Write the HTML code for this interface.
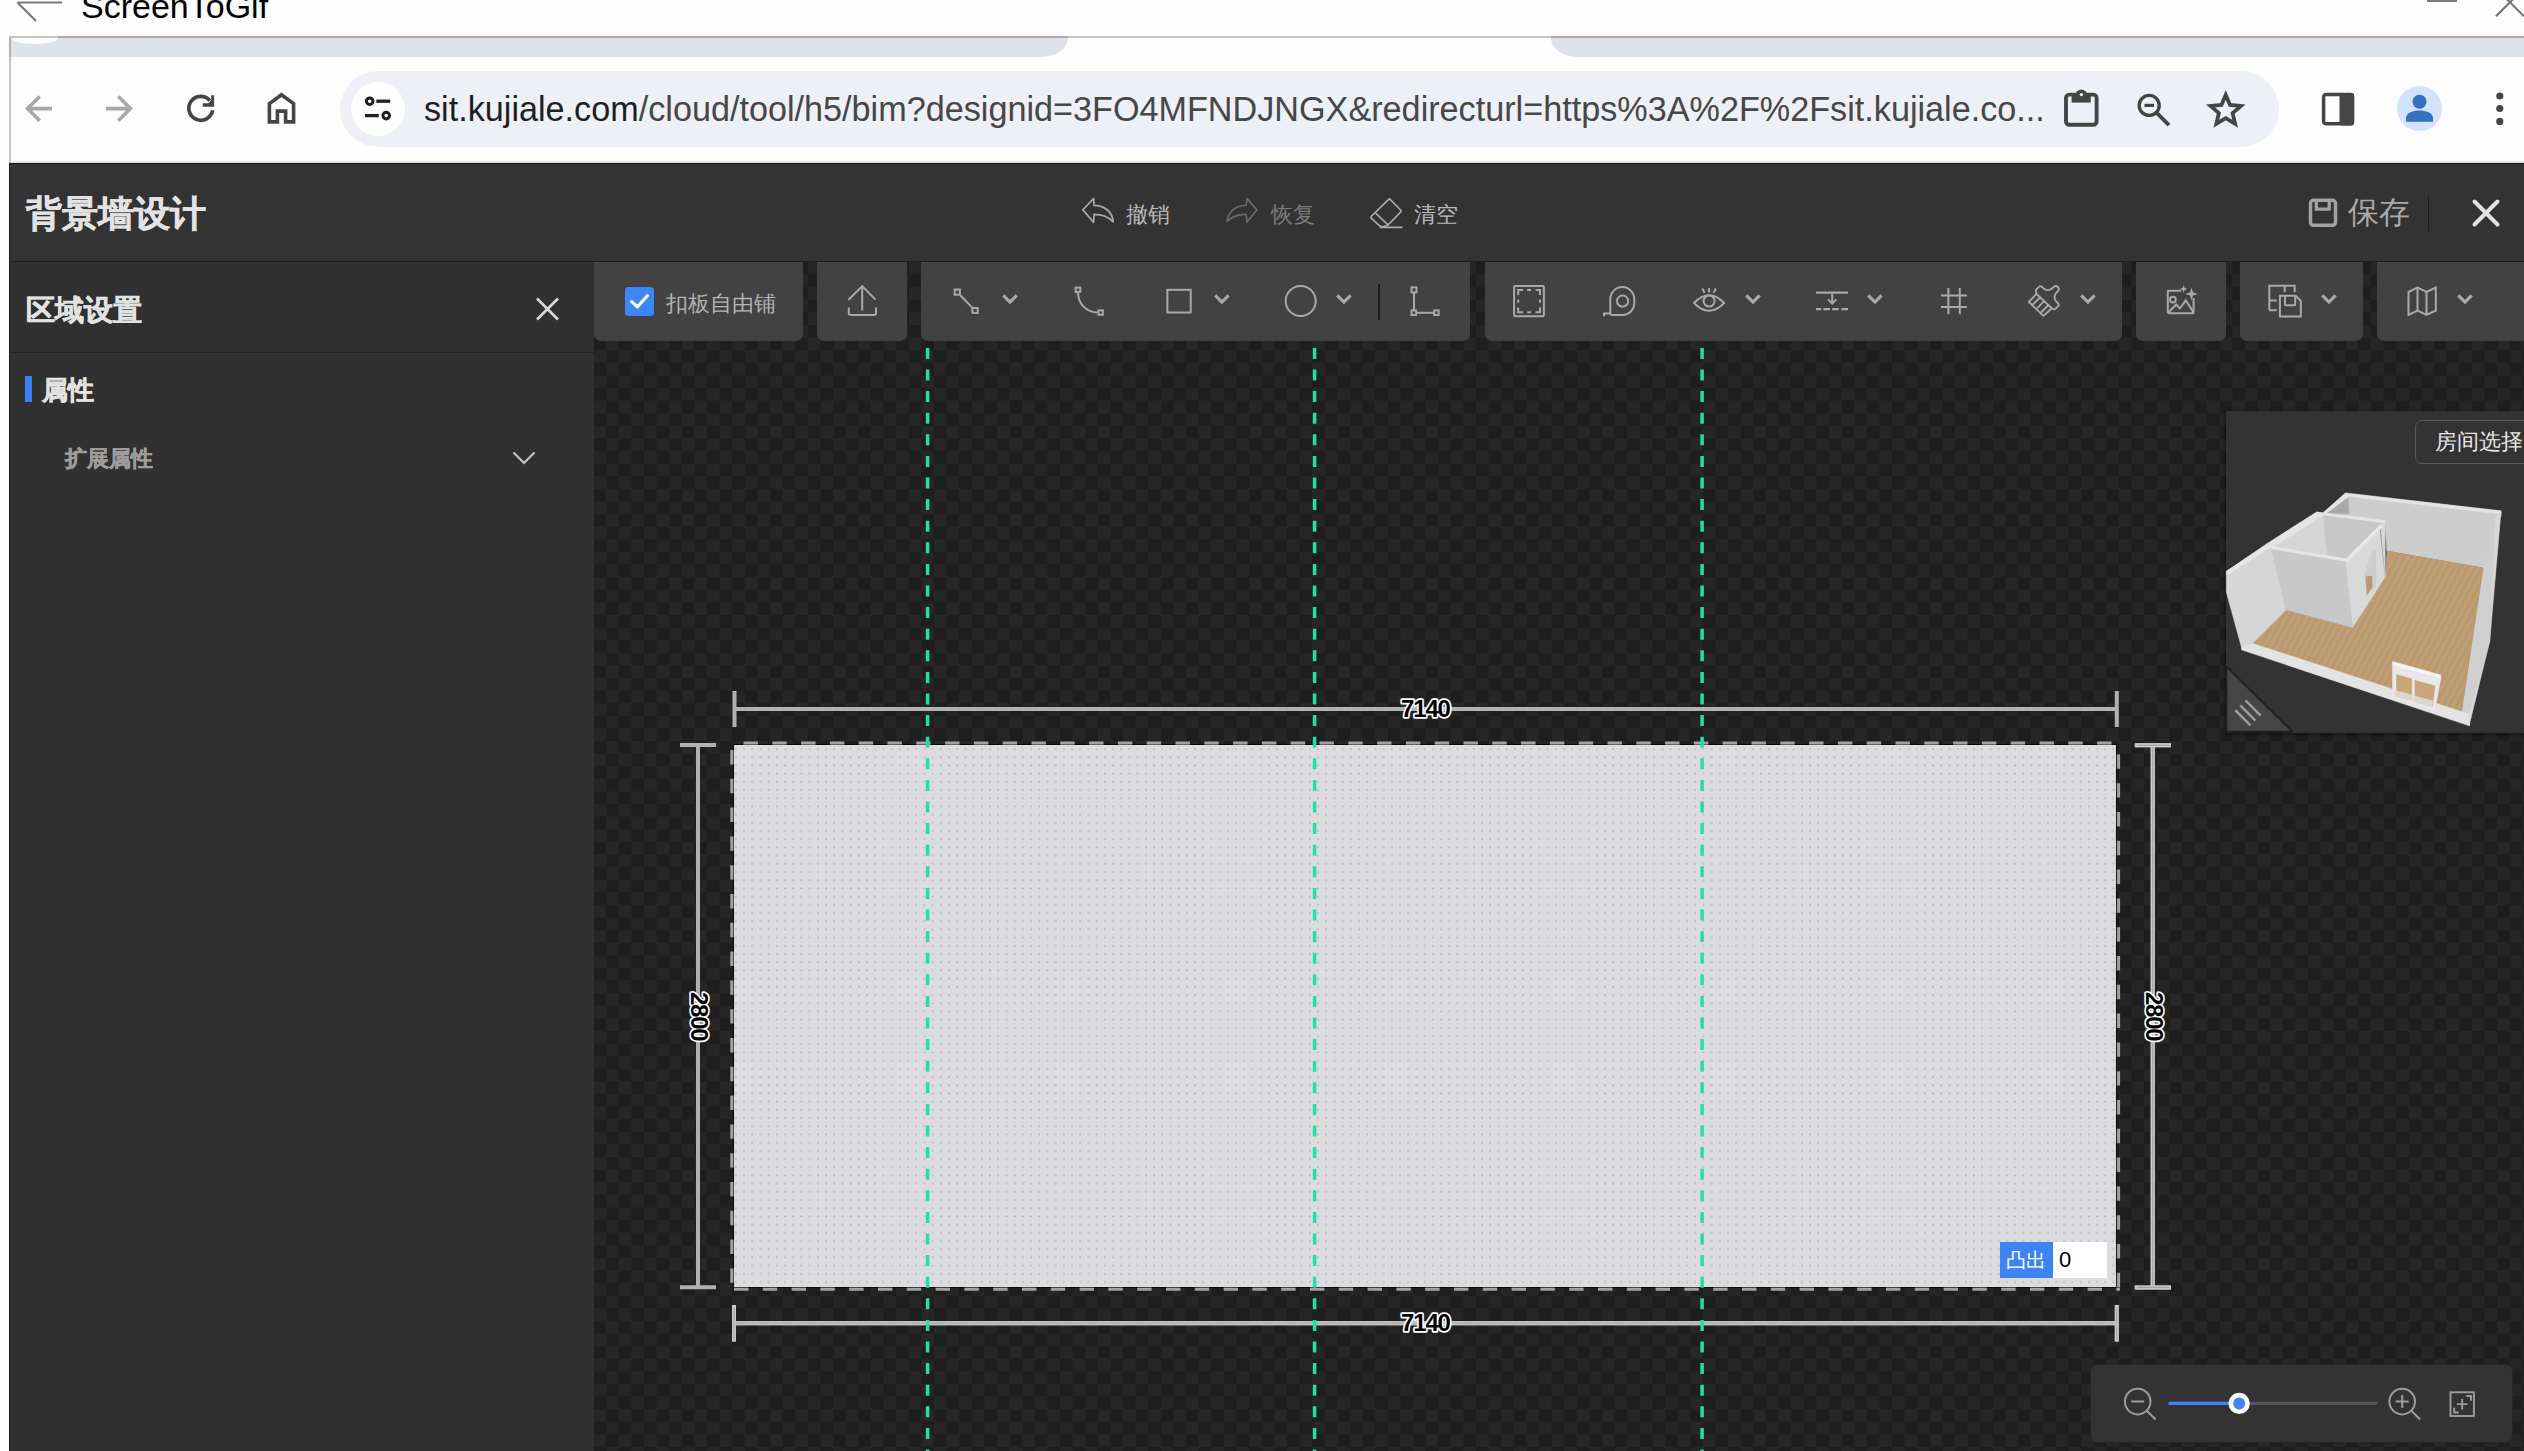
<!DOCTYPE html>
<html><head><meta charset="utf-8">
<style>
*{box-sizing:border-box}
html,body{margin:0;padding:0}
body{width:2524px;height:1451px;overflow:hidden;position:relative;background:#fdfdfd;font-family:"Liberation Sans",sans-serif}
.a{position:absolute}
.t{position:absolute;white-space:nowrap;line-height:1}
svg{position:absolute;overflow:visible}
</style></head><body>

<!-- ===== ScreenToGif title bar ===== -->
<svg style="left:0;top:0" width="80" height="36"><path d="M62 2.5H17.5M17.5 2.5L36 21" stroke="#7b7b7b" stroke-width="2.2" fill="none"/></svg>
<div class="t" id="stg" style="left:81px;top:-11px;font-size:34px;color:#000">ScreenToGif</div>
<div class="a" style="left:2427px;top:0;width:30px;height:2px;background:#7c7c7c"></div>
<svg style="left:2480px;top:0" width="44" height="36"><path d="M16 16.3L44 -11.7M16 -11.7L44 16.3" stroke="#6f6f6f" stroke-width="2" fill="none"/></svg>

<!-- ===== Chrome frame ===== -->
<div class="a" style="left:9px;top:36px;width:2515px;height:2px;background:#c6c6c6"></div>
<div class="a" style="left:9px;top:36px;width:2px;height:1415px;background:#c6c6c6"></div>
<!-- tab strip -->
<div class="a" style="left:11px;top:38px;width:1057px;height:19px;background:#dee3ea;border-bottom-right-radius:26px 19px"></div>
<div class="a" style="left:1551px;top:38px;width:973px;height:19px;background:#dee3ea;border-bottom-left-radius:26px 19px"></div>
<div class="a" style="left:58px;top:36px;width:1010px;height:2px;background:#abacaf"></div>
<div class="a" style="left:9px;top:38px;width:2px;height:19px;background:#afb0b2"></div>
<div class="a" style="left:1551px;top:36px;width:973px;height:2px;background:#abacaf"></div>
<div class="a" style="left:12px;top:38px;width:46px;height:6px;background:#fdfdfd;border-radius:0 0 23px 23px / 0 0 6px 6px"></div>

<!-- toolbar -->
<div class="a" style="left:11px;top:57px;width:2513px;height:104px;background:#fdfdfd"></div>
<div class="a" style="left:11px;top:161px;width:2513px;height:2px;background:#e6e6e6"></div>

<!-- nav icons -->
<svg style="left:20px;top:90px" width="40" height="40" viewBox="0 0 40 40"><path d="M32 18.6H8.5M19.7 6.5L7.6 18.6L19.7 30.7" stroke="#a8a8a8" stroke-width="3.6" fill="none"/></svg>
<svg style="left:100px;top:90px" width="40" height="40" viewBox="0 0 40 40"><path d="M6 18.6H29.5M18.3 6.5L30.4 18.6L18.3 30.7" stroke="#a8a8a8" stroke-width="3.6" fill="none"/></svg>
<svg style="left:180px;top:88px" width="44" height="44" viewBox="0 0 1451 1451"><path d="M1076 735A395 395 0 1 1 985 410" stroke="#454545" stroke-width="122" fill="none"/><path d="M750 500H930L1030 395V235H1125V615H750Z" fill="#454545"/></svg>
<svg style="left:262px;top:88px" width="40" height="40" viewBox="0 0 40 40"><path d="M7.4 33.9V15.6L19.5 6.7L31.6 15.6V33.9H23.6V23.1H15.4V33.9Z" stroke="#454545" stroke-width="3.6" fill="none" stroke-linejoin="miter"/></svg>

<!-- omnibox -->
<div class="a" style="left:340px;top:71px;width:1939px;height:76px;background:#edf0f7;border-radius:38px"></div>
<div class="a" style="left:351px;top:82px;width:54px;height:54px;background:#fdfdfd;border-radius:27px"></div>
<svg style="left:360px;top:92px" width="36" height="36" viewBox="0 0 36 36"><circle cx="9.7" cy="9.2" r="3.3" stroke="#202020" stroke-width="3" fill="none"/><path d="M16.3 9.2H30.2" stroke="#202020" stroke-width="3.3"/><path d="M5 23.6H18.7" stroke="#202020" stroke-width="3.3"/><circle cx="26.2" cy="23.6" r="3.3" stroke="#202020" stroke-width="3" fill="none"/></svg>
<div class="t" id="url" style="left:424px;top:92px;font-size:34.2px;color:#474747"><span style="color:#1f1f1f">sit.kujiale.com</span>/cloud/tool/h5/bim?designid=3FO4MFNDJNGX&amp;redirecturl=htt<span>ps</span>%3A%2F%2Fsit.kujiale.co...</div>

<!-- right browser icons -->
<svg style="left:2060px;top:86px" width="44" height="44" viewBox="0 0 44 44"><rect x="6" y="8.6" width="30.6" height="30.2" rx="3.2" stroke="#454545" stroke-width="3.9" fill="none"/><rect x="11.6" y="9.5" width="19.2" height="7.1" fill="#454545"/><circle cx="21.4" cy="9.3" r="5.7" fill="#454545"/><circle cx="21.4" cy="8.6" r="1.7" fill="#edf0f7"/></svg>
<svg style="left:2133.7px;top:88.6px" width="44" height="44" viewBox="0 0 44 44"><circle cx="15.2" cy="16.4" r="10" stroke="#454545" stroke-width="3.4" fill="none"/><path d="M22.5 23.7L35 36.2" stroke="#454545" stroke-width="3.8"/><path d="M10.5 16.4H20" stroke="#454545" stroke-width="3.2"/></svg>
<svg style="left:2204px;top:88px" width="44" height="44" viewBox="0 0 44 44"><path transform="translate(2.5 0) scale(0.93)" d="M20.7 7.5L25.3 18.3L37 19.3L28.1 27L30.8 38.4L20.7 32.4L10.6 38.4L13.3 27L4.4 19.3L16.1 18.3Z" stroke="#454545" stroke-width="4.1" fill="none" stroke-linejoin="miter"/></svg>
<svg style="left:2318px;top:88px" width="40" height="40" viewBox="0 0 40 40"><rect x="5.6" y="6.6" width="29" height="29.2" rx="2.5" stroke="#454545" stroke-width="3.5" fill="none"/><rect x="21.5" y="5" width="14.5" height="32.5" rx="2" fill="#454545"/></svg>
<div class="a" style="left:2397px;top:86px;width:45px;height:45px;border-radius:50%;background:#d3e3fd"></div>
<svg style="left:2397px;top:86px" width="45" height="45" viewBox="0 0 45 45"><circle cx="22.5" cy="15.8" r="7" fill="#3570c3"/><path d="M9 35.7V32C9 27 16.5 24.6 22.5 24.6C28.5 24.6 36 27 36 32V35.7Z" fill="#3570c3"/></svg>
<svg style="left:2490px;top:88px" width="20" height="40" viewBox="0 0 20 40"><circle cx="9.8" cy="8" r="3.6" fill="#454545"/><circle cx="9.8" cy="20.5" r="3.6" fill="#454545"/><circle cx="9.8" cy="33.4" r="3.6" fill="#454545"/></svg>

<!-- ===== APP ===== -->
<div class="a" style="left:9px;top:163px;width:2515px;height:1288px;background:#333333;border-top:1px solid #151515;border-left:1px solid #1c1c1c"></div>
<!-- header -->
<div class="a" style="left:10px;top:261px;width:2514px;height:1px;background:#1e1e1e"></div>
<div class="t" id="title" style="-webkit-text-stroke:0.5px #e2e2e2;left:26px;top:196px;font-size:36px;font-weight:bold;color:#e2e2e2">背景墙设计</div>

<!-- header center -->
<svg style="left:1075px;top:192px" width="50" height="40" viewBox="0 0 1814 1451"><path d="M285 645L675 235L690 485C1050 490 1360 700 1385 1085C1200 880 950 815 690 815L675 1100Z" stroke="#ababab" stroke-width="62" fill="none" stroke-linejoin="round"/></svg>
<div class="t" id="undo" style="left:1125.5px;top:203.5px;font-size:22px;color:#b9b9b9">撤销</div>
<svg style="left:1215px;top:192px" width="50" height="40" viewBox="0 0 1814 1451"><path d="M1160 240L1525 650L1160 1090L1130 815C900 800 650 870 440 1060C480 750 700 500 1130 480Z" stroke="#686a6e" stroke-width="62" fill="none" stroke-linejoin="round"/></svg>
<div class="t" id="redo" style="left:1270.5px;top:203.5px;font-size:22px;color:#7b7b7b">恢复</div>
<svg style="left:1362px;top:192px" width="50" height="40" viewBox="0 0 1814 1451"><path d="M995 240L1420 670Q1430 700 1410 720L930 1210L760 1265Q680 1260 620 1210L330 950Q300 920 330 890Z" stroke="#ababab" stroke-width="58" fill="none" stroke-linejoin="round"/><path d="M505 775L925 1175M660 1285H1445" stroke="#ababab" stroke-width="58" fill="none" stroke-linecap="round"/></svg>
<div class="t" id="clear" style="left:1413.5px;top:203.5px;font-size:22px;color:#b9b9b9">清空</div>
<!-- header right -->
<svg style="left:2300px;top:190px" width="44" height="44" viewBox="0 0 44 44"><rect x="10.5" y="10.3" width="25" height="25" rx="3" stroke="#a2a2a2" stroke-width="3.5" fill="none"/><path d="M16.3 10V19.2H29.2V10" stroke="#a2a2a2" stroke-width="3.3" fill="none"/></svg>
<div class="t" id="save" style="left:2348px;top:197px;font-size:31px;color:#a9a9a9">保存</div>
<div class="a" style="left:2428px;top:195px;width:1px;height:36px;background:#1f1f1f"></div>
<svg style="left:2466px;top:193px" width="40" height="40" viewBox="0 0 40 40"><path d="M8.5 8.5L31.5 31.5M31.5 8.5L8.5 31.5" stroke="#e2e2e2" stroke-width="4" stroke-linecap="round"/></svg>

<!-- ===== left panel ===== -->
<div class="a" style="left:10px;top:262px;width:584px;height:1189px;background:#313131"></div>
<div class="a" style="left:10px;top:352px;width:584px;height:1px;background:#222222"></div>
<div class="t" id="ptitle" style="-webkit-text-stroke:0.5px #e2e2e2;left:25.5px;top:296px;font-size:29px;font-weight:bold;color:#e2e2e2">区域设置</div>
<svg style="left:530px;top:292px" width="34" height="34" viewBox="0 0 34 34"><path d="M7 6.5L28 27.5M28 6.5L7 27.5" stroke="#dadada" stroke-width="2.6"/></svg>
<div class="a" style="left:25px;top:376px;width:7px;height:26px;background:#3b7ff6"></div>
<div class="t" id="attr" style="-webkit-text-stroke:0.5px #e2e2e2;left:42px;top:378px;font-size:25.5px;font-weight:bold;color:#e2e2e2">属性</div>
<div class="t" id="ext" style="-webkit-text-stroke:0.4px #9c9c9c;left:65px;top:448px;font-size:22px;font-weight:bold;color:#9c9c9c">扩展属性</div>
<svg style="left:508px;top:444px" width="32" height="28" viewBox="0 0 32 28"><path d="M5.5 8.5L16 19L26.5 8.5" stroke="#c4c4c4" stroke-width="2.2" fill="none"/></svg>

<!-- ===== canvas ===== -->
<svg style="left:594px;top:262px" width="1930" height="1189"><defs><pattern id="chk" x="-0.4" y="0" width="25.212" height="25.212" patternUnits="userSpaceOnUse"><rect width="25.212" height="25.212" fill="#262626"/><rect width="12.606" height="12.606" fill="#1e1e1e"/><rect x="12.606" y="12.606" width="12.606" height="12.606" fill="#1e1e1e"/></pattern></defs><rect width="1930" height="1189" fill="url(#chk)"/></svg>

<!-- toolbar groups -->
<div class="a" style="left:594px;top:262px;width:209px;height:79px;background:#424242;border-radius:0 0 7px 7px"></div>
<div class="a" style="left:817px;top:262px;width:90px;height:79px;background:#424242;border-radius:0 0 7px 7px"></div>
<div class="a" style="left:921px;top:262px;width:549px;height:79px;background:#424242;border-radius:0 0 7px 7px"></div>
<div class="a" style="left:1485px;top:262px;width:637px;height:79px;background:#424242;border-radius:0 0 7px 7px"></div>
<div class="a" style="left:2136px;top:262px;width:90px;height:79px;background:#424242;border-radius:0 0 7px 7px"></div>
<div class="a" style="left:2240px;top:262px;width:123px;height:79px;background:#424242;border-radius:0 0 7px 7px"></div>
<div class="a" style="left:2377px;top:262px;width:160px;height:79px;background:#424242;border-radius:0 0 7px 7px"></div>

<!-- toolbar icons -->
<div class="a" style="left:625px;top:287px;width:29px;height:29px;background:#3d86f6;border-radius:3.5px"></div>
<div class="t" id="kb" style="left:665.5px;top:292.5px;font-size:22px;color:#b3b3b3">扣板自由铺</div>
<svg style="left:0;top:0" width="2524" height="1451" viewBox="0 0 2524 1451">
<g fill="none" stroke="#ffffff" stroke-width="3.2" stroke-linecap="round" stroke-linejoin="round"><path d="M631.7 301.6L637.4 306.9L647.4 295.8"/></g>
<g fill="none" stroke="#a9a9a9" stroke-width="2">
<path d="M848.3 300L862.2 286.1L875.6 299.6M862.2 286.5V310.5" stroke-linejoin="miter"/>
<path d="M848.8 307.5V312.8Q848.8 315 851 315H873.8Q876 315 876 312.8V307.5"/>
<rect x="954.7" y="289.5" width="5.2" height="5.2"/><path d="M960.3 295.3L972.2 307.6"/><rect x="972.4" y="308" width="5.3" height="4.9"/>
<rect x="1075.6" y="287.6" width="4.7" height="4.3"/><path d="M1078 292.4C1078.2 304 1086 312 1097.8 312.6"/><rect x="1098.4" y="310.4" width="4.4" height="4.4"/>
<rect x="1167.4" y="289.8" width="23.3" height="22.7"/>
<circle cx="1300.7" cy="301" r="15"/>
<rect x="1411.5" y="287.4" width="5" height="5"/><rect x="1411.5" y="310.4" width="4.6" height="4.6"/><rect x="1434.2" y="310.4" width="4.4" height="4.6"/>
<path d="M1414 292.4V310.4M1416.1 312.7H1434.2"/>
<rect x="1514.1" y="286" width="29.8" height="30.2" rx="1.2"/>
<path d="M1518.2 295V289.9H1523M1535.5 289.9H1540V295M1518.2 307.5V312.3H1523M1535.5 312.3H1540V307.5M1527.2 289.9H1531M1527.2 312.3H1531M1518.2 299.4V302.8M1540 299.4V302.8"/>
<path d="M1604 316.2V313.5H1610.3M1610.3 313.5V299.1A12 12 0 0 1 1634.3 299.1V303A12 12 0 0 1 1622.3 315H1612.3Q1610.3 315 1610.3 313"/>
<circle cx="1622.6" cy="301.1" r="5.6"/>
<path d="M1694 303Q1709.1 287.5 1724.2 303Q1709.1 318.5 1694 303Z"/><circle cx="1709.1" cy="301.1" r="5.5"/>
<path d="M1709.1 288V292.6M1702.3 288.6L1704.6 292.8M1715.9 288.6L1713.6 292.8"/>
<path d="M1816 292.6H1848" stroke-width="2.2"/><path d="M1832.2 293.5V303.5M1828 299.4L1832.2 303.6L1836.4 299.4"/>
<path d="M1816 309.2H1821.3M1823.3 309.2H1830M1832.2 309.2H1838.8M1841.3 309.2H1848" stroke-width="2.2"/>
<path d="M1948.4 288V314.2M1959.8 288V314.2M1941 295.5H1967M1941 307H1967"/>
<path d="M2167.8 313.3V291.5Q2167.8 290.8 2168.5 290.8H2181M2193.6 298V312.5Q2193.6 313.3 2192.8 313.3H2168.2"/>
<path d="M2168.2 312.8L2176.2 304.5L2179.8 308.5L2185.8 300.3L2193.4 312.2"/><circle cx="2172.9" cy="299.6" r="2.9"/>
<path d="M2269.3 310.2V285.8H2294.7V292.2M2284.7 285.8V292.2M2269.3 310.2H2276.8M2269.3 300.6H2276.8"/>
<path d="M2279.9 295.8H2295.6L2300.8 300.8V316.6H2279.9Z"/><path d="M2285 295.8V304.6Q2285 305.3 2285.7 305.3H2294.5Q2295.2 305.3 2295.2 304.6V295.8"/>
<path d="M2408.5 292L2417.5 287.5L2426.5 292L2435.8 287.5V310.5L2426.5 315L2417.5 310.5L2408.5 315Z M2417.5 287.5V310.5M2426.5 292V315"/>
</g>
<g fill="#a9a9a9"><path d="M2191.5 287.5L2193 292.5L2198 294L2193 295.5L2191.5 300.5L2190 295.5L2185 294L2190 292.5Z"/><path d="M2183.6 285L2184.6 288L2187.6 289L2184.6 290L2183.6 293L2182.6 290L2179.6 289L2182.6 288Z"/></g>
<g fill="none" stroke="#a9a9a9" stroke-width="3.1" stroke-linejoin="miter">
<path d="M1003.3 295.3L1010 302L1016.7 295.3"/><path d="M1215.2 295.3L1221.9 302L1228.6 295.3"/><path d="M1337.2 295.3L1343.9 302L1350.6 295.3"/>
<path d="M1746.3 295.3L1753 302L1759.7 295.3"/><path d="M1868.2 295.3L1874.9 302L1881.6 295.3"/><path d="M2081.2 295.3L2087.9 302L2094.6 295.3"/>
<path d="M2322.2 295.3L2328.9 302L2335.6 295.3"/><path d="M2458.3 295.3L2465 302L2471.7 295.3"/>
</g>
<rect x="1378" y="284" width="2" height="36" fill="#1c1c1c"/>
<svg x="2024" y="281" width="40" height="40" viewBox="0 0 1451 1451"><g fill="none" stroke="#a9a9a9" stroke-width="68" stroke-linejoin="round">
<path d="M455 470L175 760L705 1265L1010 990"/>
<path d="M455 470L430 360Q420 330 445 305L565 195Q595 175 625 198L740 290Q860 370 990 290L1125 185Q1160 160 1190 190L1255 255Q1285 290 1255 330L1160 445Q1060 580 1150 720L1250 830Q1280 865 1250 900L1130 1015Q1090 1045 1050 1015L1010 990Z"/>
<path d="M310 860L590 590M455 1010L740 720M600 1160L880 880"/></g></svg>
</svg>

<!-- ===== canvas drawing ===== -->
<svg style="left:0;top:0" width="2524" height="1451" viewBox="0 0 2524 1451">
<defs>
<pattern id="dots" x="734" y="745" width="8.2" height="8.2" patternUnits="userSpaceOnUse"><rect x="1.05" y="3.25" width="1.6" height="1.6" fill="#9ab6ec"/></pattern>
</defs>
<!-- rect -->
<rect x="734" y="745" width="1382" height="542" fill="#dcdcdc"/>
<g stroke="#0a0a0a" stroke-width="1.1">
<path d="M733 744.5H2117" stroke-dasharray="14.4 14.4" stroke-dashoffset="3.9"/>
<path d="M734 1287.5H2117" stroke-dasharray="14.4 14.4" stroke-dashoffset="14.4"/>
<path d="M733.5 744V1288" stroke-dasharray="14.4 14.4" stroke-dashoffset="8.4"/>
<path d="M2116.5 744V1288" stroke-dasharray="14.4 14.4" stroke-dashoffset="4"/>
</g>
<rect x="734" y="745" width="1382" height="542" fill="url(#dots)"/>
<g stroke="#a2a2a2" stroke-width="3">
<path d="M734 743H2120" stroke-dasharray="14.4 14.4" stroke-dashoffset="-9.5"/>
<path d="M734 1289.3H2120" stroke-dasharray="14.4 14.4" stroke-dashoffset="0"/>
<path d="M731.8 745V1291" stroke-dasharray="14.4 14.4" stroke-dashoffset="-5"/>
<path d="M2118.6 745V1291" stroke-dasharray="14.4 14.4" stroke-dashoffset="-9.4"/>
</g>
<!-- dimension lines -->
<g stroke="#b1b1b1" stroke-width="4">
<path d="M734 709H2117M734.5 691V727M2116.8 691V727"/>
<path d="M734 1323.2H2117M734 1305V1341.6M2116.8 1305V1341.6"/>
<path d="M698 745V1288M680 745H716M680 1287.3H716"/>
<path d="M2152.7 745V1288M2134.8 745.2H2171M2134.8 1287.4H2171"/>
</g>
<g stroke="#c9c9c9" stroke-width="4">
<path d="M734 1323.2H2117M734 1305V1341.6M2116.8 1305V1341.6"/>
<path d="M2152.7 745V1288M2134.8 745.2H2171M2134.8 1287.4H2171"/>
</g>
<g stroke="#a2a2a2" stroke-width="1.1">
<path d="M736 1323.2H2115M734 1307V1339.6M2116.8 1307V1339.6"/>
<path d="M2152.7 747V1286M2136.8 745.2H2169M2136.8 1287.4H2169"/>
</g>
<!-- green guides -->
<g stroke="#1fe0a8" stroke-width="3.5" stroke-dasharray="11 10.6">
<path d="M927.6 347.9V1451"/><path d="M1314.6 347.9V1451"/><path d="M1702.1 347.9V1451"/>
</g>
<!-- labels -->
<g font-family="Liberation Sans" font-weight="bold" font-size="24" fill="#000" stroke="#fff" stroke-width="3.4" paint-order="stroke" stroke-linejoin="round" text-anchor="middle" letter-spacing="-1.2">
<text x="1425.4" y="716.8">7140</text>
<text x="1425.4" y="1331">7140</text>
<text transform="translate(691 1016.2) rotate(90)" x="0" y="0">2800</text>
<text transform="translate(2146 1016.2) rotate(90)" x="0" y="0">2800</text>
</g>
</svg>
<!-- protrude input -->
<div class="a" style="left:2000px;top:1242px;width:53px;height:36px;background:#3d84f2"></div>
<div class="t" id="tc" style="left:2006px;top:1250px;font-size:20px;color:#fff">凸出</div>
<div class="a" style="left:2053px;top:1242px;width:54px;height:36px;background:#ffffff"></div>
<div class="t" id="zero" style="left:2059px;top:1249px;font-size:22px;color:#000">0</div>

<!-- ===== thumbnail ===== -->
<div class="a" style="left:2226px;top:411px;width:298px;height:322px;background:#333333;box-shadow:0 1px 3px 1px rgba(0,0,0,0.45)"></div>
<div class="a" style="left:2415px;top:420px;width:130px;height:44px;border:1px solid #5a5a5a;border-radius:7px;background:#333333"></div>
<div class="t" id="room" style="left:2434.5px;top:430.5px;font-size:22px;color:#e6e6e6">房间选择</div>
<svg style="left:2220px;top:480px" width="300" height="260" viewBox="0 0 1674 1451">
<!-- silhouette / back wall -->
<polygon points="700,75 1568,175 1568,205 1535,205 1470,490 930,395 922,232 590,182" fill="#cdcdcd" stroke="#cdcdcd" stroke-width="3" stroke-linejoin="round"/>
<polygon points="588,180 712,78 720,190" fill="#a9a9a9" stroke="#a9a9a9" stroke-width="3" stroke-linejoin="round"/>
<polygon points="700,72 1568,172 1568,190 720,92 590,188 578,180" fill="#e4e4e4" stroke="#e4e4e4" stroke-width="3" stroke-linejoin="round"/>
<!-- right wall -->
<polygon points="1535,205 1568,178 1505,900 1390,1372 1350,1295 1470,490" fill="#d9d9d9" stroke="#d9d9d9" stroke-width="3" stroke-linejoin="round"/>
<polygon points="1470,490 1535,205 1505,900 1390,1300 1350,1290" fill="#cfcfcf" stroke="#cfcfcf" stroke-width="3" stroke-linejoin="round"/>
<!-- floor -->
<defs><pattern id="wood" width="26" height="34" patternUnits="userSpaceOnUse" patternTransform="rotate(-62)"><rect width="26" height="34" fill="#bd9b71"/><rect x="0" y="2" width="26" height="9" fill="#c1a077"/><rect x="0" y="19" width="26" height="6" fill="#b8966c"/></pattern></defs>
<polygon points="180,915 370,725 740,825 920,545 930,395 1470,490 1350,1292" fill="url(#wood)"/>
<!-- inner small room back -->
<polygon points="262,358 540,180 922,228 922,545 895,255 700,445 285,378" fill="#d6d6d6" stroke="#d6d6d6" stroke-width="3" stroke-linejoin="round"/>
<polygon points="575,190 900,240 700,440 600,415" fill="#c7c7c7" stroke="#c7c7c7" stroke-width="3" stroke-linejoin="round"/>
<polygon points="540,178 922,226 922,240 575,195 290,378 258,358" fill="#e4e4e4" stroke="#e4e4e4" stroke-width="3" stroke-linejoin="round"/>
<!-- left wall -->
<polygon points="35,510 262,358 290,378 370,725 180,915 120,935 35,625" fill="#d6d6d6" stroke="#d6d6d6" stroke-width="3" stroke-linejoin="round"/>
<polygon points="35,510 262,356 285,372 40,530" fill="#e6e6e6" stroke="#e6e6e6" stroke-width="3" stroke-linejoin="round"/>
<!-- small room front face -->
<polygon points="285,380 700,450 740,825 370,725" fill="#c8c8c8" stroke="#c8c8c8" stroke-width="3" stroke-linejoin="round"/>
<polygon points="285,370 700,440 720,458 290,385" fill="#e6e6e6" stroke="#e6e6e6" stroke-width="3" stroke-linejoin="round"/>
<!-- small room right face -->
<polygon points="700,450 890,255 920,545 740,825" fill="#d9d9d9" stroke="#d9d9d9" stroke-width="3" stroke-linejoin="round"/>
<polygon points="700,442 895,250 905,262 712,458" fill="#e8e8e8" stroke="#e8e8e8" stroke-width="3" stroke-linejoin="round"/>
<polygon points="808,530 850,392 870,392 870,590 820,645" fill="#cdcdcd" stroke="#cdcdcd" stroke-width="3" stroke-linejoin="round"/>
<polygon points="815,540 848,536 848,600 820,640" fill="#b99872" stroke="#b99872" stroke-width="3" stroke-linejoin="round"/>
<!-- front low wall -->
<polygon points="120,932 182,912 1350,1292 1392,1310 1392,1372 120,948" fill="#e3e3e3" stroke="#e3e3e3" stroke-width="3" stroke-linejoin="round"/>
<!-- door -->
<polygon points="963,1013 1232,1088 1232,1110 963,1035" fill="#f4f4f4" stroke="#f4f4f4" stroke-width="3" stroke-linejoin="round"/>
<polygon points="963,1035 1232,1110 1205,1248 1190,1280 963,1215" fill="#e8e8e8" stroke="#e8e8e8" stroke-width="3" stroke-linejoin="round"/>
<polygon points="985,1085 1070,1110 1070,1225 985,1200" fill="#c9a57a" stroke="#c9a57a" stroke-width="3" stroke-linejoin="round"/>
<polygon points="1088,1118 1200,1150 1185,1262 1088,1235" fill="#c9a57a" stroke="#c9a57a" stroke-width="3" stroke-linejoin="round"/>
<polygon points="980,1175 1070,1198 1070,1232 980,1208" fill="#ddd6cc" stroke="#ddd6cc" stroke-width="3" stroke-linejoin="round"/>
<polygon points="1088,1205 1185,1232 1182,1265 1088,1240" fill="#ddd6cc" stroke="#ddd6cc" stroke-width="3" stroke-linejoin="round"/>
<!-- resize triangle -->
<polygon points="35,1040 35,1405 405,1405" fill="#464646" stroke="#1e1e1e" stroke-width="10"/>
<path d="M85 1285L170 1370M113 1258L198 1343M142 1230L227 1315" stroke="#9c9c9c" stroke-width="14"/>
</svg>

<!-- ===== zoom panel ===== -->
<div class="a" style="left:2090px;top:1364px;width:423px;height:79px;background:#333333;border:1px solid #262626;border-radius:7px"></div>
<svg style="left:0;top:0" width="2524" height="1451" viewBox="0 0 2524 1451">
<g fill="none" stroke="#9d9d9d" stroke-width="2">
<circle cx="2137.7" cy="1401.6" r="12.8"/><path d="M2146.8 1410.7L2155.6 1419.5M2131.2 1401.6H2144.2"/>
<circle cx="2402.2" cy="1401.6" r="12.8"/><path d="M2411.3 1410.7L2420.1 1419.5M2395.7 1401.6H2408.7M2402.2 1395.1V1408.1"/>
<rect x="2450.5" y="1392.3" width="23.4" height="23.7" stroke-width="1.9"/>
<path d="M2456.8 1404.1H2467.5M2462.2 1398.9V1409.6M2466.4 1396H2471V1400.8M2454.2 1407.7V1412.5H2458.7" stroke-width="1.9"/>
</g>
<path d="M2170 1403.4H2376" stroke="#55565a" stroke-width="3.2" stroke-linecap="round"/>
<path d="M2170 1403.4H2239" stroke="#3d84f4" stroke-width="3.2" stroke-linecap="round"/>
<circle cx="2239.2" cy="1403.4" r="10.6" fill="#ffffff"/>
<circle cx="2239.2" cy="1403.4" r="6" fill="#3d84f4"/>
</svg>

</body></html>
